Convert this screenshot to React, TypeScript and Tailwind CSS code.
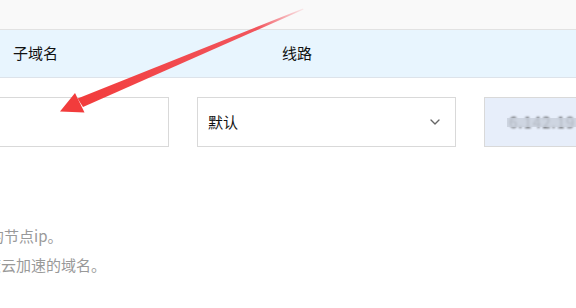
import { ChevronDown } from 'lucide-react';

const font = { fontFamily: '"Microsoft YaHei", "Noto Sans CJK SC", sans-serif' };

const App = () => {
  return (
    <div className="relative w-[576px] h-[308px] overflow-hidden bg-white text-[15px]" style={font}>
      {/* 顶部 */}
      <div className="h-[30px] bg-[#f9f9f9] border-b border-[#e2e2e2]" />

      {/* 表头 */}
      <div className="h-[48px] bg-[#e8f5fe] border-b border-[#dde3ea] flex items-center text-[#111]">
        <span className="w-[282px] pl-[13px]">子域名</span>
        <span>线路</span>
      </div>

      {/* 输入行 */}
      <div className="flex gap-[28px] mt-[19px]">
        <input
          className="w-[169px] h-[50px] border border-l-0 border-[#d9d9d9] bg-white outline-none"
          readOnly
        />
        <div className="w-[259px] h-[50px] border border-[#d9d9d9] flex items-center justify-between pl-[10px] pr-[12px] text-[#111]">
          <span>默认</span>
          <ChevronDown className="w-[16px] h-[16px] text-[#666]" strokeWidth={2} />
        </div>
        <div className="relative flex-1 h-[50px] border border-r-0 border-[#d9d9d9] bg-[#e7eefa] flex items-center pl-[24px]">
          <span className="text-[#333] blur-[0.8px] tracking-[1px]">6.142.19</span>
          <div className="absolute left-[22px] top-[20px] w-[80px] h-[9px] bg-[#c9d0dc]/85" />
        </div>
      </div>

      {/* 提示 */}
      <div className="mt-[74px] ml-[-9px] text-[#999] leading-[29px]">
        <p className="ml-[-2px]">的节点ip。</p>
        <p className="ml-[-5px]">度云加速的域名。</p>
      </div>

      {/* 红色箭头 */}
      <svg className="absolute inset-0 pointer-events-none" width="576" height="308">
        <defs>
          <linearGradient id="g" x1="303" y1="9" x2="80" y2="103" gradientUnits="userSpaceOnUse">
            <stop offset="0" stopColor="#f24452" stopOpacity="0.1" />
            <stop offset="0.2" stopColor="#f2444c" stopOpacity="0.9" />
            <stop offset="1" stopColor="#f23c3c" />
          </linearGradient>
        </defs>
        <polygon points="303,8.4 303.6,9.6 83,107 77.6,98.5" fill="url(#g)" />
        <polygon points="60,111.5 75,93 84.5,112.5" fill="#f23c3c" />
      </svg>
    </div>
  );
};

export default App;
